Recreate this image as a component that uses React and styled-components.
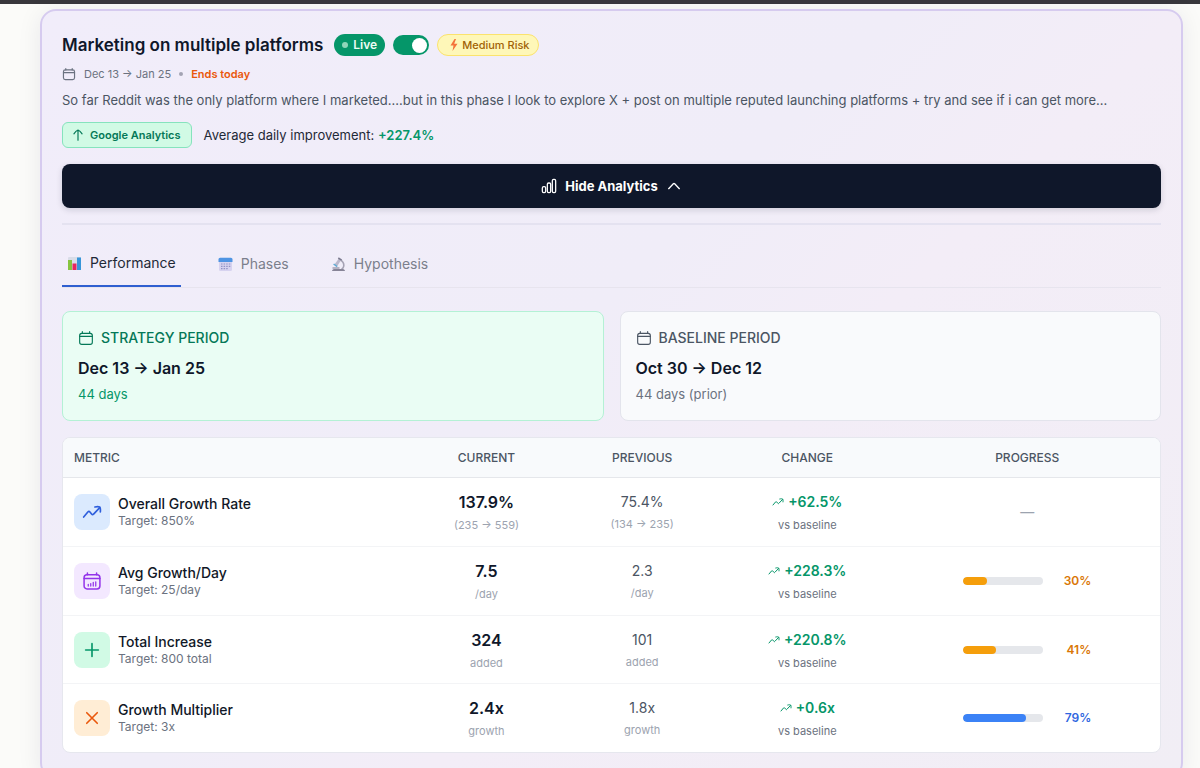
import React, { useState } from "react";
import styled, { createGlobalStyle } from "styled-components";

const GlobalStyle = createGlobalStyle`
  * {
    box-sizing: border-box;
  }
  body {
    margin: 0;
    background: #fbfbf9;
    color: #111827;
    font-family: Inter, "Liberation Sans", sans-serif;
    font-size: 13px;
    line-height: 20px;
  }
  h2, h3, p {
    margin: 0;
  }
  button, input {
    font: inherit;
    margin: 0;
  }
`;

const Page = styled.main`
  border-top: 4px solid #38373c;
  padding: 5px 17px 24px 40px;
`;

const Card = styled.article`
  border: 2px solid #d6cbef;
  border-radius: 16px;
  padding: 23px 20px 24px;
  background: linear-gradient(135deg, #f1edfa 0%, #f0edf8 45%, #f3edf7 60%, #f1eef5 100%);
  box-shadow: 0 2px 24px rgba(30, 30, 60, 0.08);
`;

const TitleRow = styled.header`
  display: flex;
  align-items: center;
  gap: 11px;
  height: 22px;
`;

const Badges = styled.div`
  display: flex;
  align-items: center;
  gap: 8px;
`;

const Title = styled.h2`
  font-size: 17px;
  line-height: 22px;
  font-weight: 600;
  color: #0f172a;
  white-space: nowrap;
`;

const Pill = styled.span`
  display: flex;
  align-items: center;
  height: 22px;
  border-radius: 11px;
  font-size: 12px;
  line-height: 20px;
  white-space: nowrap;
`;

const LivePill = styled(Pill)`
  gap: 5px;
  padding: 0 8px;
  background: #059669;
  color: #ecfdf5;
  font-weight: 600;
`;

const RiskPill = styled(Pill)`
  gap: 3px;
  padding: 0 8px 0 11px;
  border: 1px solid #fbe36d;
  background: #fef7b8;
  color: #a16207;
  font-size: 11px;
  font-weight: 500;
`;

const Dot = styled.span`
  width: ${(p) => p.$size}px;
  height: ${(p) => p.$size}px;
  border-radius: 50%;
  background: ${(p) => p.$color};
`;

const Switch = styled.input`
  appearance: none;
  flex: none;
  display: flex;
  align-items: center;
  width: 36px;
  height: 20px;
  padding: 2px;
  border-radius: 10px;
  background: ${(p) => (p.checked ? "#059669" : "#cbd5e1")};
  justify-content: ${(p) => (p.checked ? "flex-end" : "flex-start")};
  cursor: pointer;

  &::before {
    content: "";
    width: 15px;
    height: 15px;
    border-radius: 50%;
    background: #fff;
  }
`;

const DateRow = styled.div`
  display: flex;
  align-items: center;
  gap: 8px;
  height: 20px;
  margin-top: 8px;
  color: #6b7280;
  font-size: 11px;
`;

const EndsToday = styled.span`
  color: #ea580c;
  font-weight: 600;
`;

const Description = styled.p`
  margin-top: 6px;
  color: #4b5563;
  overflow: hidden;
  white-space: nowrap;
  text-overflow: ellipsis;
`;

const SourceRow = styled.div`
  display: flex;
  align-items: center;
  gap: 12px;
  margin-top: 12px;
  color: #1f2937;
`;

const SourceTag = styled.span`
  display: flex;
  align-items: center;
  gap: 5px;
  height: 26px;
  padding: 0 10px 0 8px;
  border: 1px solid #86e3bd;
  border-radius: 6px;
  background: #d1fae5;
  color: #047857;
  font-size: 11px;
  font-weight: 600;
`;

const Gain = styled.strong`
  color: #059669;
  font-weight: 600;
`;

const ToggleButton = styled.button`
  display: flex;
  align-items: center;
  justify-content: center;
  gap: 8px;
  width: 100%;
  height: 44px;
  margin-top: 16px;
  border: 0;
  border-radius: 8px;
  background: #0f172a;
  color: #fff;
  font-size: 13px;
  font-weight: 700;
  box-shadow: 0 2px 6px rgba(15, 23, 42, 0.15);
  cursor: pointer;
`;

const Analytics = styled.section`
  margin-top: 15px;
  border-top: 2px solid #e4e2f0;
`;

const Tabs = styled.div`
  display: flex;
  gap: 32px;
  height: 63px;
  padding-top: 16px;
  border-bottom: 1px solid #e7e4ee;
`;

const Tab = styled.button`
  display: flex;
  align-items: center;
  gap: 8px;
  height: 46px;
  padding: 0 5px;
  border: 0;
  border-bottom: ${(p) => (p.$active ? "2px solid #2f5fd0" : "0")};
  background: none;
  color: ${(p) => (p.$active ? "#1f2937" : "#7b7f8c")};
  font-size: 14px;
  cursor: pointer;
`;

const TabIcon = styled.span`
  display: flex;
  opacity: ${(p) => (p.$active ? 1 : 0.75)};
`;

const Periods = styled.div`
  display: grid;
  grid-template-columns: 1fr 1fr;
  gap: 16px;
  margin-top: 23px;
`;

const Period = styled.section`
  height: 110px;
  padding: 16px 15px;
  border: 1px solid ${(p) => (p.$current ? "#b4f1d5" : "#e3e4ec")};
  border-radius: 8px;
  background: ${(p) => (p.$current ? "#eafdf4" : "#f9fafc")};
`;

const PeriodLabel = styled.h3`
  display: flex;
  align-items: center;
  gap: 7px;
  font-size: 14px;
  line-height: 20px;
  font-weight: 500;
  color: ${(p) => (p.$current ? "#047857" : "#4b5563")};
`;

const PeriodDates = styled.p`
  margin-top: 8px;
  font-size: 16px;
  line-height: 24px;
  font-weight: 600;
  color: #0f172a;
`;

const PeriodDays = styled.p`
  margin-top: 4px;
  font-size: 13px;
  color: ${(p) => (p.$current ? "#059669" : "#6b7280")};
`;

const TableFrame = styled.div`
  margin-top: 16px;
  overflow: hidden;
  border: 1px solid #e6e7ee;
  border-radius: 8px;
  background: #fff;
`;

const Table = styled.table`
  width: 100%;
  border-collapse: separate;
  border-spacing: 0;
  table-layout: fixed;
`;

const Th = styled.th`
  width: ${(p) => p.$width};
  height: 40px;
  padding: 0 11px;
  border-bottom: 1px solid #e5e7eb;
  background: #f8fafc;
  color: #4b5563;
  font-size: 12px;
  font-weight: 500;
  text-align: ${(p) => p.$align || "center"};
`;

const Td = styled.td`
  height: 68px;
  padding: 0 11px;
  text-align: center;
  vertical-align: middle;
`;

const Row = styled.tr`
  & + & td {
    border-top: 1px solid #f3f4f6;
  }
  &:nth-child(even) td {
    height: 69px;
  }
`;

const MetricCell = styled.div`
  display: flex;
  align-items: center;
  gap: 8px;
  text-align: left;
`;

const MetricIcon = styled.span`
  display: flex;
  align-items: center;
  justify-content: center;
  width: 36px;
  height: 36px;
  border-radius: 8px;
  background: ${(p) => p.$bg};
  color: ${(p) => p.$color};
`;

const MetricName = styled.div`
  font-size: 14px;
  line-height: 18px;
  font-weight: 500;
  color: #111827;
`;

const Target = styled.div`
  font-size: 12px;
  line-height: 16px;
  color: #6b7280;
`;

const Current = styled.div`
  font-size: 16px;
  line-height: 26px;
  font-weight: 600;
  color: #0f172a;
`;

const Previous = styled.div`
  font-size: 14px;
  line-height: 24px;
  color: #4b5563;
`;

const Change = styled.div`
  display: flex;
  align-items: center;
  justify-content: center;
  gap: 4px;
  font-size: 14px;
  line-height: 26px;
  font-weight: 600;
  color: #059669;
`;

const Note = styled.div`
  font-size: 11px;
  line-height: 20px;
  color: ${(p) => (p.$dark ? "#6b7280" : "#9ca3af")};
`;

const ProgressCell = styled.div`
  display: flex;
  align-items: center;
  justify-content: center;
  gap: 12px;
`;

const Track = styled.div`
  width: 80px;
  height: 8px;
  overflow: hidden;
  border-radius: 4px;
  background: #e5e7eb;
`;

const Fill = styled.div`
  height: 100%;
  border-radius: 4px;
  background: ${(p) => p.$color};
`;

const Percent = styled.span`
  width: 36px;
  color: ${(p) => p.$color};
  font-size: 12px;
  font-weight: 600;
  text-align: right;
`;

const Dash = styled.span`
  color: #9ca3af;
  font-size: 14px;
`;

const Icon = ({ size = 16, stroke = 1.5, children }) => (
  <svg
    width={size}
    height={size}
    viewBox="0 0 24 24"
    fill="none"
    stroke="currentColor"
    strokeWidth={stroke}
    strokeLinecap="round"
    strokeLinejoin="round"
    aria-hidden="true"
  >
    {children}
  </svg>
);

const CalendarIcon = ({ size, stroke = 1.7 }) => (
  <Icon size={size} stroke={stroke}>
    <rect x="2.5" y="5" width="19" height="16.5" rx="3.2" />
    <path d="M2.5 9.5h19M6.5 2.500V5M17.500 2.500V5" />
  </Icon>
);

const CalendarDaysIcon = () => (
  <Icon size={20} stroke={1.8}>
    <rect x="2.500" y="4.500" width="19" height="17" rx="3.500" />
    <path d="M2.500 9h19M6.500 2.300v2.200M17.500 2.300v2.200" />
    <path d="M7.500 18v-2M10.500 18v-3M13.500 18v-4.500M16.500 18v-5" strokeWidth="1.500" />
  </Icon>
);

const TrendIcon = ({ size, stroke }) => (
  <Icon size={size} stroke={stroke}>
    <path d="M2 18l5-6c1-1.100 1.700-1 2.500 0l2 2.500c.8 1 1.600 1 2.400 0L21 7" />
    <path d="M15.500 6c2.500-.6 4.500-.6 5.800 0 .8 1.400 1 3.300.7 5.800" />
  </Icon>
);

const BarsIcon = () => (
  <Icon size={16} stroke={1.9}>
    <rect x="2" y="13" width="5" height="9" rx="2" />
    <rect x="9.500" y="7.500" width="5" height="14.500" rx="2" />
    <rect x="17" y="2" width="5" height="20" rx="2" />
  </Icon>
);

const ArrowUpIcon = () => (
  <Icon size={14} stroke={2}>
    <path d="M12 21V3.500M5 10c2-3 4.500-5.500 7-6.500 2.500 1 5 3.500 7 6.500" />
  </Icon>
);

const ChevronUpIcon = () => (
  <Icon size={16} stroke={2}>
    <path d="M4 16l7-7.300c.7-.7 1.300-.7 2 0L20 16" />
  </Icon>
);

const BoltIcon = () => (
  <svg width="10" height="14" viewBox="0 0 10 14" aria-hidden="true">
    <path d="M5.500 1L1.500 7.500h3L3.500 13l5-7.300H5.200L7 1z" fill="#f4743b" />
  </svg>
);

const ChartEmoji = () => (
  <svg width="15" height="15" viewBox="0 0 15 15" aria-hidden="true">
    <rect x="1" y="1" width="13" height="13" rx="1" fill="#d9dde8" />
    <rect x="1" y="4" width="4" height="10" fill="#86c440" />
    <rect x="5.500" y="7.500" width="4" height="6.500" fill="#e5265e" />
    <rect x="10" y="1.500" width="4" height="12.500" fill="#3796d9" />
  </svg>
);

const CalendarEmoji = () => (
  <svg width="15" height="15" viewBox="0 0 15 15" aria-hidden="true">
    <rect x="1" y="1" width="13" height="13" rx="1.500" fill="#cfcbed" />
    <path d="M.5 2.500C.5 1.500 1.200.8 2.200.8h10.600c1 0 1.700.7 1.700 1.700V5H.5z" fill="#1977dc" />
    <path
      d="M3 7h1.500M5.600 7h1.500M8.200 7h1.500M10.800 7h1.500M3 9.300h1.500M5.600 9.300h1.500M8.200 9.300h1.500M10.800 9.300h1.500M3 11.600h1.500M5.600 11.600h1.500M8.200 11.600h1.500"
      stroke="#7476b5"
      strokeWidth="1.200"
    />
  </svg>
);

const MicroscopeEmoji = () => (
  <svg width="15" height="15" viewBox="0 0 15 15" fill="none" aria-hidden="true">
    <path d="M8 3c5 .5 6.500 6.500 2.500 9.500" stroke="#8e8b9f" strokeWidth="1.600" />
    <path d="M7.800 1.600L3.500 7.500l2.600 1.800L10 3.200z" fill="#aaa7bd" />
    <path d="M7.300 1l3.400 2.100" stroke="#53536a" strokeWidth="1.500" />
    <path d="M2.600 7l3.600 2.700" stroke="#2f94c8" strokeWidth="1.500" />
    <path d="M1.500 11h7" stroke="#77758a" strokeWidth="1.300" />
    <path d="M1 14c.3-1.500 1.400-2 3-2h7c1.600 0 2.700.5 3 2z" fill="#646277" />
  </svg>
);

const PlusIcon = () => (
  <Icon size={18} stroke={2.2}>
    <path d="M12 3.500v17M3.500 12h17" />
  </Icon>
);

const TimesIcon = () => (
  <Icon size={18} stroke={2.2}>
    <path d="M5 5l14 14M19 5L5 19" />
  </Icon>
);

const metrics = [
  {
    name: "Overall Growth Rate",
    target: "850%",
    icon: <TrendIcon size={20} stroke={2} />,
    bg: "#dbeafe",
    color: "#2f5fdc",
    current: "137.9%",
    currentNote: "(235 → 559)",
    previous: "75.4%",
    previousNote: "(134 → 235)",
    change: "+62.5%",
  },
  {
    name: "Avg Growth/Day",
    target: "25/day",
    icon: <CalendarDaysIcon />,
    bg: "#f3e8ff",
    color: "#9333ea",
    current: "7.5",
    currentNote: "/day",
    previous: "2.3",
    previousNote: "/day",
    change: "+228.3%",
    progress: 30,
    barColor: "#f59e0b",
    textColor: "#d97706",
  },
  {
    name: "Total Increase",
    target: "800 total",
    icon: <PlusIcon />,
    bg: "#d1fae5",
    color: "#059669",
    current: "324",
    currentNote: "added",
    previous: "101",
    previousNote: "added",
    change: "+220.8%",
    progress: 41,
    barColor: "#f59e0b",
    textColor: "#d97706",
  },
  {
    name: "Growth Multiplier",
    target: "3x",
    icon: <TimesIcon />,
    bg: "#ffedd5",
    color: "#ea580c",
    current: "2.4x",
    currentNote: "growth",
    previous: "1.8x",
    previousNote: "growth",
    change: "+0.6x",
    progress: 79,
    barColor: "#3b82f6",
    textColor: "#2f66e0",
  },
];

const tabs = [
  { id: "performance", label: "Performance", icon: <ChartEmoji /> },
  { id: "phases", label: "Phases", icon: <CalendarEmoji /> },
  { id: "hypothesis", label: "Hypothesis", icon: <MicroscopeEmoji /> },
];

const MetricRow = ({ metric }) => (
  <Row>
    <Td>
      <MetricCell>
        <MetricIcon $bg={metric.bg} $color={metric.color}>
          {metric.icon}
        </MetricIcon>
        <div>
          <MetricName>{metric.name}</MetricName>
          <Target>Target: {metric.target}</Target>
        </div>
      </MetricCell>
    </Td>
    <Td>
      <Current>{metric.current}</Current>
      <Note>{metric.currentNote}</Note>
    </Td>
    <Td>
      <Previous>{metric.previous}</Previous>
      <Note>{metric.previousNote}</Note>
    </Td>
    <Td>
      <Change>
        <TrendIcon size={12} stroke={2} />
        {metric.change}
      </Change>
      <Note $dark>vs baseline</Note>
    </Td>
    <Td>
      {metric.progress ? (
        <ProgressCell>
          <Track
            role="progressbar"
            aria-label={metric.name}
            aria-valuenow={metric.progress}
            aria-valuemin={0}
            aria-valuemax={100}
          >
            <Fill $color={metric.barColor} style={{ width: `${metric.progress}%` }} />
          </Track>
          <Percent $color={metric.textColor}>{metric.progress}%</Percent>
        </ProgressCell>
      ) : (
        <Dash>—</Dash>
      )}
    </Td>
  </Row>
);

const Performance = () => (
  <>
    <Periods>
      <Period $current>
        <PeriodLabel $current>
          <CalendarIcon size={16} />
          STRATEGY PERIOD
        </PeriodLabel>
        <PeriodDates>Dec 13 → Jan 25</PeriodDates>
        <PeriodDays $current>44 days</PeriodDays>
      </Period>
      <Period>
        <PeriodLabel>
          <CalendarIcon size={16} />
          BASELINE PERIOD
        </PeriodLabel>
        <PeriodDates>Oct 30 → Dec 12</PeriodDates>
        <PeriodDays>44 days (prior)</PeriodDays>
      </Period>
    </Periods>
    <TableFrame>
      <Table>
        <thead>
          <tr>
            <Th $width="31.5%" $align="left">METRIC</Th>
            <Th $width="14.2%">CURRENT</Th>
            <Th $width="14.2%">PREVIOUS</Th>
            <Th $width="15.9%">CHANGE</Th>
            <Th $width="24.2%">PROGRESS</Th>
          </tr>
        </thead>
        <tbody>
          {metrics.map((metric) => (
            <MetricRow key={metric.name} metric={metric} />
          ))}
        </tbody>
      </Table>
    </TableFrame>
  </>
);

const App = () => {
  const [live, setLive] = useState(true);
  const [open, setOpen] = useState(true);
  const [tab, setTab] = useState("performance");

  return (
    <>
      <GlobalStyle />
      <Page>
        <Card>
          <TitleRow>
            <Title>Marketing on multiple platforms</Title>
            <Badges>
              <LivePill>
                <Dot $size={6} $color="#8fd6b9" />
                Live
              </LivePill>
              <Switch
                type="checkbox"
                role="switch"
                aria-label="Live"
                checked={live}
                onChange={() => setLive(!live)}
              />
              <RiskPill>
                <BoltIcon />
                Medium Risk
              </RiskPill>
            </Badges>
          </TitleRow>
          <DateRow>
            <CalendarIcon size={14} stroke={2} />
            <span>Dec 13 → Jan 25</span>
            <Dot $size={4} $color="#a3a3b3" />
            <EndsToday>Ends today</EndsToday>
          </DateRow>
          <Description>
            So far Reddit was the only platform where I marketed....but in this phase I look to
            explore X + post on multiple reputed launching platforms + try and see if i can get
            more...
          </Description>
          <SourceRow>
            <SourceTag>
              <ArrowUpIcon />
              Google Analytics
            </SourceTag>
            <span>
              Average daily improvement: <Gain>+227.4%</Gain>
            </span>
          </SourceRow>
          <ToggleButton aria-expanded={open} onClick={() => setOpen(!open)}>
            <BarsIcon />
            {open ? "Hide Analytics" : "Show Analytics"}
            <ChevronUpIcon />
          </ToggleButton>
          {open && (
            <Analytics>
              <Tabs role="tablist">
                {tabs.map((t) => (
                  <Tab
                    key={t.id}
                    role="tab"
                    aria-selected={tab === t.id}
                    $active={tab === t.id}
                    onClick={() => setTab(t.id)}
                  >
                    <TabIcon $active={tab === t.id}>{t.icon}</TabIcon>
                    {t.label}
                  </Tab>
                ))}
              </Tabs>
              {tab === "performance" && <Performance />}
            </Analytics>
          )}
        </Card>
      </Page>
    </>
  );
};

export default App;
